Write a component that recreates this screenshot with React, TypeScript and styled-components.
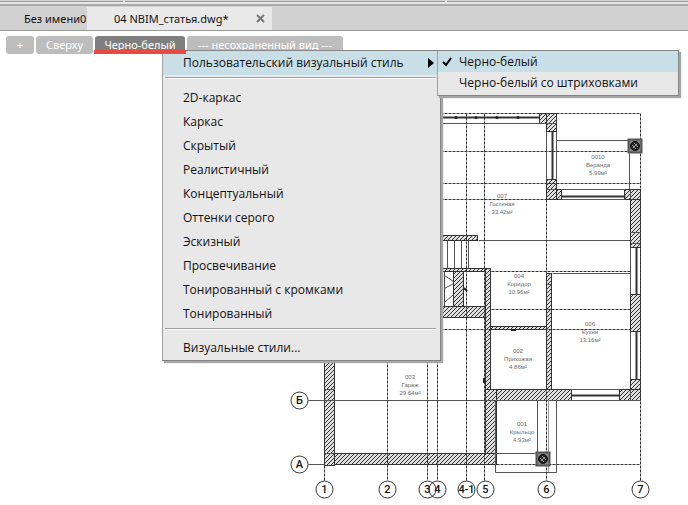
import React from "react";
import styled, { createGlobalStyle } from "styled-components";

const GlobalStyle = createGlobalStyle`
  * { box-sizing: border-box; }
  body { margin: 0; background: #fff; font-family: "Noto Sans", "Open Sans", sans-serif; color: #222; }
  button { font: inherit; color: inherit; border: 0; background: none; padding: 0; margin: 0; text-align: left; white-space: nowrap; }
`;

const Page = styled.div`
  display: flex;
  flex-direction: column;
  min-height: 100vh;
`;

const RibbonEdge = styled.div`
  display: flex;
  gap: 2px;
  height: 4px;
  padding-bottom: 2px;
  background: #e6e6e6;
`;

const RibbonPanel = styled.div<{ $width?: number }>`
  flex: ${(p) => (p.$width ? `0 0 ${p.$width}px` : "1")};
  background: #d2d2d2;
  border-bottom: 1px solid #9a9a9a;
`;

const TabBar = styled.nav`
  display: flex;
  align-items: stretch;
  height: 27px;
  padding-top: 1px;
  background: #d1d1d1;
  border-top: 2px solid #a9a9a9;
  border-bottom: 1px solid #9a9a9a;
`;

const Tab = styled.div<{ $active?: boolean; $width: number }>`
  display: flex;
  align-items: center;
  flex: 0 0 ${(p) => p.$width}px;
  background: ${(p) => (p.$active ? "#e9e9e9" : "transparent")};
`;

const TabLabel = styled.button<{ $indent: number }>`
  && {
    padding-left: ${(p) => p.$indent}px;
    font-size: 11px;
    line-height: 20px;
    color: #111;
  }
`;

const CloseButton = styled.button`
  && {
    display: flex;
    margin-left: auto;
    padding-right: 7px;
  }
`;

const Workspace = styled.main`
  position: relative;
  flex: 1;
`;

const ViewControls = styled.div`
  display: flex;
  gap: 2px;
  height: 29px;
  padding: 5px 0 0 6px;
`;

const Chip = styled.button<{ $width: number; $active?: boolean }>`
  && {
    width: ${(p) => p.$width}px;
    height: 18px;
    border-radius: 3px;
    text-align: center;
    font-size: 11px;
    line-height: 18px;
    color: #fff;
    background: ${(p) => (p.$active ? "#7f7f7f" : "#bdbdbd")};
  }
`;

const Underline = styled.div`
  position: absolute;
  z-index: 3;
  left: 94px;
  top: 19px;
  width: 92px;
  height: 4px;
  background: #e84a40;
`;

const Popup = styled.div<{ $sub?: boolean }>`
  position: absolute;
  z-index: ${(p) => (p.$sub ? 2 : 1)};
  left: ${(p) => (p.$sub ? 274 : 162)}px;
  top: ${(p) => (p.$sub ? -1 : 19)}px;
  width: ${(p) => (p.$sub ? 242 : 279)}px;
  padding: ${(p) => (p.$sub ? "0 0 2px" : "0")};
  background: #e8e8e8;
  border: 1px solid #858585;
  border-left-color: #a0a0a0;
  box-shadow: 2px 2px 1px #a6a6a6;
`;

const MenuItem = styled.button<{ $compact?: boolean; $selected?: boolean }>`
  && {
    display: flex;
    align-items: center;
    width: 100%;
    height: ${(p) => (p.$compact ? 21 : 24)}px;
    padding: 0 6px 0 ${(p) => (p.$compact ? 4 : 20)}px;
    font-family: "Open Sans", "Noto Sans", sans-serif;
    font-size: 12px;
    line-height: 20px;
    color: #111;
    background: ${(p) => (p.$selected ? "#c9dfe7" : "transparent")};
  }
`;

const CheckSlot = styled.span`
  display: flex;
  flex: 0 0 17px;
`;

const Arrow = styled.svg`
  margin-left: auto;
`;

const Separator = styled.hr`
  height: 2px;
  margin: 2px 4px 6px 2px;
  border: 0;
  border-top: 1px solid #a2a2a2;
  background: #fff;
`;

const Group = styled.div`
  padding: 1px 0 0;
`;

const Drawing = styled.svg`
  display: block;
  max-width: 100%;
`;

const RoomText = styled.text`
  font-family: "Liberation Sans", sans-serif;
  font-size: 6px;
  fill: #6a6a6a;
  text-anchor: middle;
`;

const AxisText = styled.text`
  font-family: Roboto, sans-serif;
  font-size: 11px;
  font-weight: 500;
  fill: #111;
  text-anchor: middle;
`;

const styles = [
  "2D-каркас",
  "Каркас",
  "Скрытый",
  "Реалистичный",
  "Концептуальный",
  "Оттенки серого",
  "Эскизный",
  "Просвечивание",
  "Тонированный с кромками",
  "Тонированный",
];

type Box = [number, number, number, number];

const walls: Box[] = [
  [324, 340, 10, 125],
  [334, 453, 162, 11],
  [485, 389, 11, 64],
  [496, 389, 75, 11],
  [619, 389, 21, 11],
  [485, 268, 5, 121],
  [436, 268, 49, 3],
  [436, 235, 41, 5],
  [453, 271, 10, 35],
  [436, 306, 49, 11],
  [490, 326, 56, 3],
  [546, 273, 5, 116],
  [539, 113, 7, 10],
  [546, 113, 10, 18],
  [546, 179, 10, 20],
  [556, 189, 5, 10],
  [624, 189, 16, 10],
  [630, 199, 10, 48],
  [630, 294, 10, 37],
  [630, 379, 10, 10],
];

const thinLines: Box[] = [
  [436, 123, 556, 123],
  [546, 131, 546, 179],
  [556, 131, 556, 179],
  [556, 140, 628, 140],
  [629, 153, 629, 189],
  [561, 189, 625, 189],
  [561, 199, 625, 199],
  [630, 247, 630, 294],
  [640, 189, 640, 400],
  [630, 331, 630, 379],
  [571, 389, 619, 389],
  [571, 400, 619, 400],
  [478, 240, 630, 240],
  [552, 273, 630, 273],
  [447, 240, 447, 268],
  [454, 240, 454, 268],
  [461, 240, 461, 268],
  [468, 240, 468, 268],
  [444, 275, 453, 281],
  [444, 288, 453, 283],
  [444, 302, 453, 294],
  [324, 389, 334, 389],
  [324, 453, 334, 453],
  [546, 123, 556, 123],
  [546, 189, 556, 189],
  [630, 189, 630, 199],
  [630, 232, 640, 232],
  [630, 243, 640, 243],
  [630, 389, 630, 400],
  [546, 284, 551, 284],
  [495, 400, 495, 472],
  [495, 472, 556, 472],
  [556, 400, 556, 472],
  [537, 400, 537, 453],
  [495, 453, 537, 453],
  [308, 400, 640, 400],
  [308, 464, 324, 464],
];

const dashedLines: Box[] = [
  [436, 113, 640, 113],
  [640, 113, 640, 480],
  [436, 151, 640, 151],
  [436, 183, 640, 183],
  [436, 199, 546, 199],
  [491, 271, 630, 271],
  [491, 309, 630, 309],
  [436, 329, 630, 329],
  [496, 464, 640, 464],
  [324, 465, 324, 480],
  [387, 340, 387, 480],
  [427, 340, 427, 480],
  [437, 340, 437, 480],
  [466, 113, 466, 480],
  [484, 113, 484, 480],
  [546, 199, 546, 480],
];

const glazing: Box[] = [
  [436, 117, 539, 117],
  [552, 131, 552, 179],
  [561, 196, 625, 196],
  [636, 247, 636, 294],
  [636, 331, 636, 379],
  [571, 395, 619, 395],
];

const rooms = [
  { x: 502, y: 198, lines: ["007", "Гостиная", "33.42м²"] },
  { x: 598, y: 159, lines: ["0010", "Веранда", "5.99м²"] },
  { x: 519, y: 278, lines: ["004", "Коридор", "10.96м²"] },
  { x: 590, y: 326, lines: ["006", "Кухня", "13.16м²"] },
  { x: 518, y: 353, lines: ["002", "Прихожая", "4.86м²"] },
  { x: 410, y: 379, lines: ["003", "Гараж", "29.64м²"] },
  { x: 522, y: 426, lines: ["001", "Крыльцо", "4.93м²"] },
];

const axes = [
  { x: 299, y: 400, label: "Б" },
  { x: 299, y: 464, label: "А" },
  { x: 324, y: 489, label: "1" },
  { x: 387, y: 489, label: "2" },
  { x: 427, y: 489, label: "3" },
  { x: 437, y: 489, label: "4" },
  { x: 466, y: 489, label: "4-1" },
  { x: 485, y: 489, label: "5" },
  { x: 546, y: 489, label: "6" },
  { x: 640, y: 489, label: "7" },
];

const columns = [
  { x: 635, y: 146 },
  { x: 543, y: 459 },
];

function Lines({ items }: { items: Box[] }) {
  return (
    <>
      {items.map(([x1, y1, x2, y2], i) => (
        <path key={i} d={`M${x1 + 0.5} ${y1 + 0.5}L${x2 + 0.5} ${y2 + 0.5}`} />
      ))}
    </>
  );
}

function FloorPlan() {
  return (
    <Drawing width="688" height="445" viewBox="0 60 688 445" role="img" aria-label="План этажа">
      <defs>
        <pattern id="hatch" width="4" height="4" patternUnits="userSpaceOnUse">
          <rect width="4" height="4" fill="#dedede" />
          <path d="M-1 1L1 -1M-1 5L5 -1M3 5L5 3" stroke="#333" />
        </pattern>
      </defs>
      <g fill="url(#hatch)" stroke="#333">
        {walls.map(([x, y, w, h], i) => (
          <rect key={i} x={x + 0.5} y={y + 0.5} width={w} height={h} />
        ))}
      </g>
      <g stroke="#555" fill="none">
        <Lines items={thinLines} />
      </g>
      <g stroke="#333" fill="none" strokeDasharray="3 1">
        <Lines items={dashedLines} />
      </g>
      <g stroke="#333" strokeWidth="2" fill="none">
        <Lines items={glazing} />
      </g>
      <path d="M444.500 271V306" stroke="#444" />
      <path d="M548.500 400V472" stroke="#999" />
      <path d="M464 288l3 3M511 330h5M484 378v5" stroke="#222" strokeWidth="2" />
      <g fill="#222">
        <circle cx="456" cy="117.500" r="1.500" />
        <circle cx="476" cy="117.500" r="1.500" />
        <circle cx="497" cy="117.500" r="1.500" />
        <circle cx="518" cy="117.500" r="1.500" />
      </g>
      {columns.map((c) => (
        <g key={c.x} transform={`translate(${c.x} ${c.y})`}>
          <rect x="-6.500" y="-6.500" width="13" height="13" fill="#888" stroke="#555" strokeWidth="2" />
          <circle r="4.500" fill="#222" stroke="#111" />
          <path d="M-3 -1L1 3M-1 -3L3 1M-2 2L2 -2" stroke="#999" />
        </g>
      ))}
      {rooms.map((r) =>
        r.lines.map((line, i) => (
          <RoomText key={line} x={r.x} y={r.y + i * 8}>
            {line}
          </RoomText>
        )),
      )}
      {axes.map((a) => (
        <g key={a.label}>
          <circle cx={a.x + 0.5} cy={a.y + 0.5} r="8.500" fill="none" stroke="#333" />
          <AxisText x={a.x + 0.5} y={a.y + 4}>
            {a.label}
          </AxisText>
        </g>
      ))}
    </Drawing>
  );
}

export default function App() {
  return (
    <Page>
      <GlobalStyle />
      <RibbonEdge>
        <RibbonPanel $width={123} />
        <RibbonPanel $width={320} />
        <RibbonPanel />
      </RibbonEdge>
      <TabBar>
        <Tab $width={87}>
          <TabLabel $indent={24}>Без имени0</TabLabel>
        </Tab>
        <Tab $active $width={185}>
          <TabLabel $indent={27}>04 NBIM_статья.dwg*</TabLabel>
          <CloseButton aria-label="Закрыть">
            <svg width="9" height="9" viewBox="0 0 9 9">
              <path d="M1 1L8 8M8 1L1 8" stroke="#777" strokeWidth="2" />
            </svg>
          </CloseButton>
        </Tab>
      </TabBar>
      <Workspace>
        <ViewControls>
          <Chip $width={28}>+</Chip>
          <Chip $width={57}>Сверху</Chip>
          <Chip $width={90} $active>
            Черно-белый
          </Chip>
          <Chip $width={156}>--- несохраненный вид ---</Chip>
        </ViewControls>
        <Underline />
        <FloorPlan />
        <Popup role="menu">
          <MenuItem role="menuitem" $selected>
            Пользовательский визуальный стиль
            <Arrow width="6" height="10" viewBox="0 0 6 10">
              <path d="M0 0L6 5L0 10Z" fill="#000" />
            </Arrow>
          </MenuItem>
          <Separator />
          <Group>
            {styles.map((s) => (
              <MenuItem key={s} role="menuitem">
                {s}
              </MenuItem>
            ))}
          </Group>
          <Separator />
          <MenuItem role="menuitem">Визуальные стили...</MenuItem>
          <Popup role="menu" $sub>
            <MenuItem role="menuitemcheckbox" aria-checked="true" $compact $selected>
              <CheckSlot>
                <svg width="10" height="10" viewBox="0 0 10 10">
                  <path d="M1 5L4 8L9 1" fill="none" stroke="#000" strokeWidth="2" />
                </svg>
              </CheckSlot>
              Черно-белый
            </MenuItem>
            <MenuItem role="menuitemcheckbox" aria-checked="false" $compact>
              <CheckSlot />
              Черно-белый со штриховками
            </MenuItem>
          </Popup>
        </Popup>
      </Workspace>
    </Page>
  );
}
